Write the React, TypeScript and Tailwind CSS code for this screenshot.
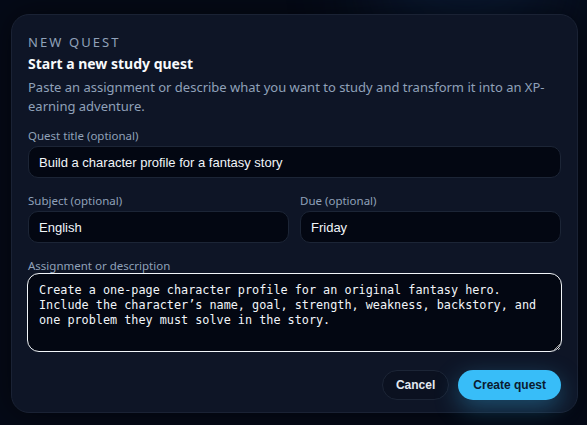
import { useState } from "react";

const ui = "font-['Segoe_UI','Noto_Sans','Open_Sans',sans-serif]";
const field = "font-['Liberation_Sans',Arial,sans-serif]";

function Label({ children, className = "" }: { children: React.ReactNode; className?: string }) {
  return <label className={`block text-[11.5px] leading-4 text-slate-400 ${ui} ${className}`}>{children}</label>;
}

function Input({ value, onChange }: { value: string; onChange: (v: string) => void }) {
  return (
    <input
      value={value}
      onChange={e => onChange(e.target.value)}
      className={`w-full h-[32px] rounded-[10px] bg-[#030712] border border-[#1c2536] px-[10px] text-[13px] text-slate-100 outline-none ${field}`}
    />
  );
}

export default function App() {
  const [title, setTitle] = useState("Build a character profile for a fantasy story");
  const [subject, setSubject] = useState("English");
  const [due, setDue] = useState("Friday");
  const [desc, setDesc] = useState(
    "Create a one-page character profile for an original fantasy hero. Include the character\u2019s name, goal, strength, weakness, backstory, and one problem they must solve in the story."
  );

  return (
    <div className="relative w-[587px] h-[425px] overflow-hidden bg-[#050a17] pt-[14px] pl-[11px] pr-[9px]">
      {/* soft glow behind the dialog */}
      <div className="absolute -top-[60px] right-[20px] w-[200px] h-[100px] rounded-full bg-[#12305a]/40 blur-[40px]" />

      <div className="relative h-[399px] rounded-[18px] bg-[#0e1526] border border-[#1a2234] px-[16px] pt-[19px] shadow-[0_0_30px_rgba(0,0,0,0.5)]">
        <div className={`text-[13px] leading-4 tracking-[0.16em] text-slate-400 ${ui}`}>NEW QUEST</div>
        <h2 className={`mt-[4px] text-[14px] leading-5 font-bold text-slate-50 ${ui}`}>Start a new study quest</h2>
        <p className={`mt-[4px] text-[13px] leading-[19px] text-slate-400 ${ui}`}>
          Paste an assignment or describe what you want to study and transform it into an XP-earning adventure.
        </p>

        <div className="mt-[12px]">
          <Label className="mb-[2px]">Quest title (optional)</Label>
          <Input value={title} onChange={setTitle} />
        </div>

        <div className="mt-[15px] grid grid-cols-2 gap-[11px]">
          <div>
            <Label className="mb-[2px]">Subject (optional)</Label>
            <Input value={subject} onChange={setSubject} />
          </div>
          <div>
            <Label className="mb-[2px]">Due (optional)</Label>
            <Input value={due} onChange={setDue} />
          </div>
        </div>

        <div className="mt-[15px]">
          <Label className="-mb-px">Assignment or description</Label>
          <textarea
            value={desc}
            onChange={e => setDesc(e.target.value)}
            className="-ml-px block w-[535px] h-[79px] rounded-[12px] bg-[#030712] border border-slate-100 px-[11px] pt-[9px] text-[11.8px] leading-[15px] text-slate-100 outline-none font-['DejaVu_Sans_Mono',Consolas,monospace]"
          />
        </div>

        <div className={`mt-[18px] flex justify-end gap-[9px] ${field}`}>
          <button className="h-[30px] px-[13px] rounded-full border border-[#1c2536] bg-[#0b1120] text-[12px] font-bold text-slate-200">
            Cancel
          </button>
          <button className="h-[30px] px-[15px] rounded-full bg-[#38bdf8] text-[12px] font-bold text-[#0b1a2e] shadow-[0_8px_24px_rgba(56,189,248,0.35)]">
            Create quest
          </button>
        </div>
      </div>
    </div>
  );
}
